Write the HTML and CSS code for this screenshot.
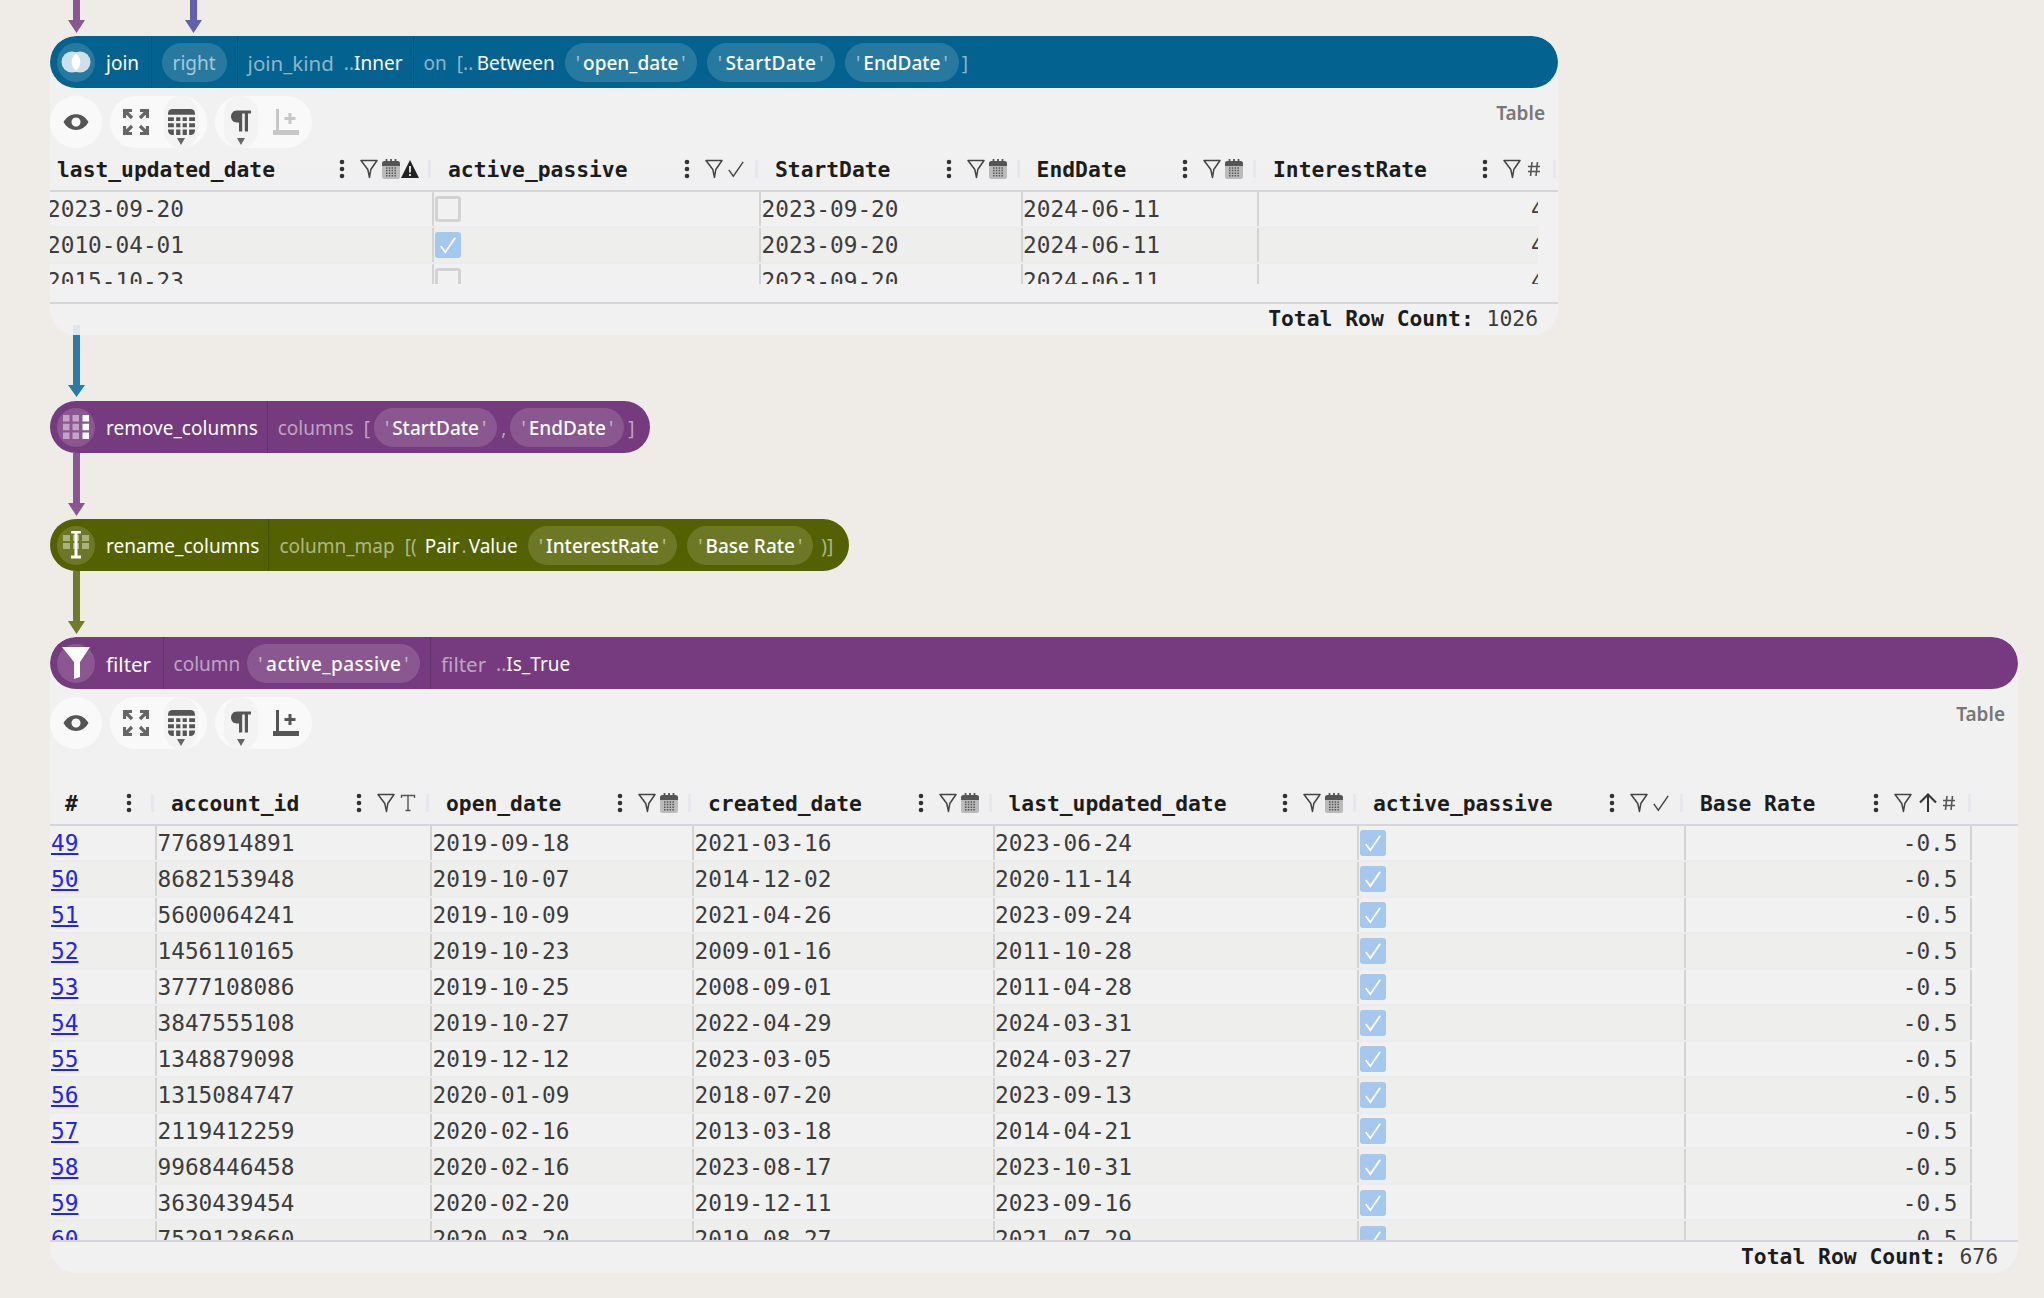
FILE: index.html
```html
<!DOCTYPE html>
<html lang="en">

<head>
    <title>Workflow</title>
    <link rel="stylesheet" href="styles.css">
</head>

<body>
    <svg class="defs">
        <symbol id="i-kebab" viewBox="0 0 8 20"><circle cx="4" cy="3" r="2.3"/><circle cx="4" cy="10" r="2.3"/><circle cx="4" cy="17" r="2.3"/></symbol>
        <symbol id="i-filter" viewBox="0 0 18 20"><path d="M1 1.5H17L10.8 10.5L9.5 18.5L7.8 10.5Z" fill="none" stroke="#444" stroke-width="1.5" stroke-linejoin="round"/></symbol>
        <symbol id="i-cal" viewBox="0 0 18 20"><rect x="0" y="2" width="18" height="18" rx="2.5" fill="#bbb"/><path d="M0 4.5C0 3 1 2 2.5 2h13C17 2 18 3 18 4.5V7H0z" fill="#555"/><path d="M4.5 0v4M9 0v4M13.5 0v4" stroke="#555" stroke-width="1.8"/><path d="M4 9h10M4 11.6h10M4 14.2h10M4 16.8h10" stroke="#555" stroke-width="1.5" stroke-dasharray="1.5 1.3"/></symbol>
        <symbol id="i-warn" viewBox="0 0 18 18"><path d="M9 0L18 18H0Z" fill="#222"/><path d="M9 6v6.5M9 14v2" stroke="#f1f1f2" stroke-width="1.8"/></symbol>
        <symbol id="i-check" viewBox="0 0 20 20"><path d="M2 11L7 18L18 2" fill="none" stroke="#444" stroke-width="1.5"/></symbol>
        <symbol id="i-text" viewBox="0 0 16 18"><path d="M1.5 4V1.5H14.5V4M8 1.5V16.5M5.5 16.5H10.5" fill="none" stroke="#555" stroke-width="1.4"/></symbol>
        <symbol id="i-num" viewBox="0 0 14 16"><path d="M5 1L3.5 15M10.5 1L9 15M1 5.5H13M1 10.5H13" fill="none" stroke="#555" stroke-width="1.6"/></symbol>
        <symbol id="i-up" viewBox="0 0 20 20"><path d="M10 19V2M2 9.5L10 1.5L18 9.5" fill="none" stroke="#333" stroke-width="2"/></symbol>
        <symbol id="i-eye" viewBox="0 0 26 18"><path fill-rule="evenodd" d="M0.5 9C6 -1.5 20 -1.5 25.5 9C20 19.5 6 19.5 0.5 9ZM13 4.5a4.5 4.5 0 1 0 0.01 0Z"/></symbol>
        <symbol id="i-full" viewBox="0 0 26 26"><path d="M1.5 9V1.5H9M2.5 2.5L9 9M24.5 9V1.5H17M23.5 2.5L17 9M1.5 17V24.5H9M2.5 23.5L9 17M24.5 17V24.5H17M23.5 23.5L17 17" fill="none" stroke="#666" stroke-width="3.2"/></symbol>
        <symbol id="i-grid" viewBox="0 0 27 26"><rect width="27" height="26" rx="4.5" fill="#555"/><path d="M7 6.5V26M13.5 6.5V26M20 6.5V26M0 7H27M0 13.2H27M0 19.4H27" stroke="#f2f2f2" stroke-width="2.3"/></symbol>
        <symbol id="i-para" viewBox="0 0 22 22"><path d="M8 0.5H22V3.6H19V21.5H15.8V3.6H13.2V21.5H10V12.5H8C0 12.5 0 0.5 8 0.5Z"/></symbol>
        <symbol id="i-add" viewBox="0 0 26 26"><path d="M0 21H26V26H0ZM3 0H6V21H3ZM15.5 4H18.5V8H22.5V11H18.5V15H15.5V11H11.5V8H15.5Z"/></symbol>
    </svg>

    <div class="arrow-row">
        <svg class="arrow" width="17" height="33" viewBox="0 0 17 33"><path d="M5 0H12V20H17L8.5 33L0 20H5Z" fill="#8a5593"/></svg>
        <svg class="arrow" width="17" height="33" viewBox="0 0 17 33"><path d="M5 0H12V20H17L8.5 33L0 20H5Z" fill="#6060ad"/></svg>
    </div>

    <div class="card card-short">
        <div class="node-head blue">
            <span class="node-icon">
                <svg width="30" height="24" viewBox="0 0 30 24"><circle cx="11" cy="12" r="10.5" fill="#cfe0ea"/><circle cx="19" cy="12" r="10.5" fill="#cfe0ea"/><path d="M15 3.5a10.5 10.5 0 0 1 0 17a10.5 10.5 0 0 1 0-17Z" fill="#fff"/></svg>
            </span>
            <span class="node-name name-pad">join</span>
            <span class="seg"><span class="pill plain">right</span></span>
            <span class="seg"><span class="dim roomy">join_kind</span><span><span class="dim">..</span>Inner</span></span>
            <span class="seg"><span class="dim">on</span><span><span class="dim open">[..</span>Between</span><span class="pill"><i>'</i>open_date<i>'</i></span><span class="pill spaced"><i>'</i>StartDate<i>'</i></span><span class="pill"><i>'</i>EndDate<i>'</i></span><span class="dim after-pill">]</span></span>
        </div>
        <div class="tools">
            <div class="tool-pills">
                <div class="tool-pill eye"><svg class="ic" width="26" height="18"><use href="#i-eye"/></svg></div>
                <div class="tool-pill">
                    <svg class="ic-full" width="26" height="26"><use href="#i-full"/></svg>
                    <span class="drop"><svg width="27" height="26"><use href="#i-grid"/></svg></span>
                </div>
                <div class="tool-pill">
                    <span class="drop para"><svg class="ic" width="22" height="22"><use href="#i-para"/></svg></span>
                    <svg class="ic-add off" width="26" height="26"><use href="#i-add"/></svg>
                </div>
            </div>
            <span class="viz-name">Table</span>
        </div>
        <div class="grid">
            <div class="hd cols-a">
                <div class="hc"><b>last_updated_date</b><span class="acts"><svg class="k"><use href="#i-kebab"/></svg><svg class="f"><use href="#i-filter"/></svg><svg class="c"><use href="#i-cal"/></svg><svg class="w"><use href="#i-warn"/></svg></span><s></s></div>
                <div class="hc"><b>active_passive</b><span class="acts"><svg class="k"><use href="#i-kebab"/></svg><svg class="f"><use href="#i-filter"/></svg><svg class="c"><use href="#i-check"/></svg></span><s></s></div>
                <div class="hc"><b>StartDate</b><span class="acts"><svg class="k"><use href="#i-kebab"/></svg><svg class="f"><use href="#i-filter"/></svg><svg class="c"><use href="#i-cal"/></svg></span><s></s></div>
                <div class="hc"><b>EndDate</b><span class="acts"><svg class="k"><use href="#i-kebab"/></svg><svg class="f"><use href="#i-filter"/></svg><svg class="c"><use href="#i-cal"/></svg></span><s></s></div>
                <div class="hc"><b>InterestRate</b><span class="acts"><svg class="k"><use href="#i-kebab"/></svg><svg class="f"><use href="#i-filter"/></svg><svg class="n"><use href="#i-num"/></svg></span><s></s></div>
            </div>
            <div class="body body-a">
                <div class="row cols-a"><div class="td first">2023-09-20</div><div class="td"><span class="cb"></span></div><div class="td">2023-09-20</div><div class="td">2024-06-11</div><div class="td rate">4.25</div></div>
                <div class="row cols-a"><div class="td first">2010-04-01</div><div class="td"><span class="cb on"><svg width="18" height="18" viewBox="0 0 20 20"><path d="M2 11L7 18L18 2" fill="none" stroke="#fff" stroke-width="2"/></svg></span></div><div class="td">2023-09-20</div><div class="td">2024-06-11</div><div class="td rate">4.25</div></div>
                <div class="row cols-a"><div class="td first">2015-10-23</div><div class="td"><span class="cb"></span></div><div class="td">2023-09-20</div><div class="td">2024-06-11</div><div class="td rate">4.25</div></div>
            </div>
        </div>
        <div class="foot foot-a"><b>Total Row Count:</b> 1026</div>
    </div>

    <svg class="arrow link first-link" width="17" height="76" viewBox="0 0 17 76"><path d="M5 0H12V10H5Z" fill="#dfe7ec"/><path d="M5 10H12V60H17L8.5 72L0 60H5Z" fill="#2a7ba6"/></svg>

    <div class="node-head purple">
        <span class="node-icon">
            <svg width="26" height="24" viewBox="0 0 26 24"><path d="M0 0h6.5v6.5H0zM9.5 0H16v6.5H9.5zM0 8.7h6.5v6.5H0zM9.5 8.7H16v6.5H9.5zM0 17.5h6.5V24H0zM9.5 17.5H16V24H9.5z" fill="#c2a4c8"/><path d="M19.5 0H26v6.5h-6.5zM19.5 8.7H26v6.5h-6.5zM19.5 17.5H26V24h-6.5z" fill="#fff"/></svg>
        </span>
        <span class="node-name">remove_columns</span>
        <span class="seg"><span class="dim">columns</span><span class="tight"><span class="dim">[</span><span class="pill"><i>'</i>StartDate<i>'</i></span><span class="dim">,</span><span class="pill"><i>'</i>EndDate<i>'</i></span><span class="dim">]</span></span></span>
    </div>

    <svg class="arrow link" width="17" height="66" viewBox="0 0 17 66"><path d="M5 0H12V50H17L8.5 63L0 50H5Z" fill="#8a5593"/></svg>

    <div class="node-head olive">
        <span class="node-icon">
            <svg width="28" height="28" viewBox="0 0 28 28"><path d="M1 4h7v6H1zM20 4h7v6h-7zM1 12h7v6H1zM20 12h7v6h-7zM11 4h6v6h-6zM11 12h6v6h-6z" fill="#a9b27a"/><path d="M9 1h10M9 26h10M14 1v25" fill="none" stroke="#fff" stroke-width="3"/></svg>
        </span>
        <span class="node-name">rename_columns</span>
        <span class="seg"><span class="dim">column_map</span><span class="tight wide"><span class="dim">[(</span><span>Pair<span class="dim dot">.</span>Value</span></span><span class="pill"><i>'</i>InterestRate<i>'</i></span><span class="pill"><i>'</i>Base Rate<i>'</i></span><span class="dim close">)]</span></span>
    </div>

    <svg class="arrow link" width="17" height="66" viewBox="0 0 17 66"><path d="M5 0H12V50H17L8.5 63L0 50H5Z" fill="#6f7d2a"/></svg>

    <div class="card card-tall">
        <div class="node-head purple">
            <span class="node-icon">
                <svg width="28" height="32" viewBox="0 0 28 32"><path d="M0 0H28L18 15V30L12 32V15Z" fill="#fff"/></svg>
            </span>
            <span class="node-name roomy name-pad">filter</span>
            <span class="seg"><span class="dim">column</span><span class="pill spaced near"><i>'</i>active_passive<i>'</i></span></span>
            <span class="seg"><span class="dim roomy">filter</span><span><span class="dim">..</span>Is_True</span></span>
        </div>
        <div class="tools tools-gap">
            <div class="tool-pills">
                <div class="tool-pill eye"><svg class="ic" width="26" height="18"><use href="#i-eye"/></svg></div>
                <div class="tool-pill">
                    <svg class="ic-full" width="26" height="26"><use href="#i-full"/></svg>
                    <span class="drop"><svg width="27" height="26"><use href="#i-grid"/></svg></span>
                </div>
                <div class="tool-pill">
                    <span class="drop para"><svg class="ic" width="22" height="22"><use href="#i-para"/></svg></span>
                    <svg class="ic-add" width="26" height="26"><use href="#i-add"/></svg>
                </div>
            </div>
            <span class="viz-name">Table</span>
        </div>
        <div class="grid">
            <div class="hd cols-b">
                <div class="hc"><b>#</b><span class="acts"><svg class="k"><use href="#i-kebab"/></svg></span><s></s></div>
                <div class="hc"><b>account_id</b><span class="acts"><svg class="k"><use href="#i-kebab"/></svg><svg class="f"><use href="#i-filter"/></svg><svg class="t"><use href="#i-text"/></svg></span><s></s></div>
                <div class="hc"><b>open_date</b><span class="acts"><svg class="k"><use href="#i-kebab"/></svg><svg class="f"><use href="#i-filter"/></svg><svg class="c"><use href="#i-cal"/></svg></span><s></s></div>
                <div class="hc"><b>created_date</b><span class="acts"><svg class="k"><use href="#i-kebab"/></svg><svg class="f"><use href="#i-filter"/></svg><svg class="c"><use href="#i-cal"/></svg></span><s></s></div>
                <div class="hc"><b>last_updated_date</b><span class="acts"><svg class="k"><use href="#i-kebab"/></svg><svg class="f"><use href="#i-filter"/></svg><svg class="c"><use href="#i-cal"/></svg></span><s></s></div>
                <div class="hc"><b>active_passive</b><span class="acts"><svg class="k"><use href="#i-kebab"/></svg><svg class="f"><use href="#i-filter"/></svg><svg class="c"><use href="#i-check"/></svg></span><s></s></div>
                <div class="hc"><b>Base Rate</b><span class="acts"><svg class="k"><use href="#i-kebab"/></svg><svg class="f"><use href="#i-filter"/></svg><svg class="u"><use href="#i-up"/></svg><svg class="n"><use href="#i-num"/></svg></span><s></s></div>
            </div>
            <div class="body body-b">
                <div class="row cols-b"><div class="td idx"><a href="#">49</a></div><div class="td">7768914891</div><div class="td">2019-09-18</div><div class="td">2021-03-16</div><div class="td">2023-06-24</div><div class="td"><span class="cb on"><svg width="18" height="18" viewBox="0 0 20 20"><path d="M2 11L7 18L18 2" fill="none" stroke="#fff" stroke-width="2"/></svg></span></div><div class="td num">-0.5</div></div>
                <div class="row cols-b"><div class="td idx"><a href="#">50</a></div><div class="td">8682153948</div><div class="td">2019-10-07</div><div class="td">2014-12-02</div><div class="td">2020-11-14</div><div class="td"><span class="cb on"><svg width="18" height="18" viewBox="0 0 20 20"><path d="M2 11L7 18L18 2" fill="none" stroke="#fff" stroke-width="2"/></svg></span></div><div class="td num">-0.5</div></div>
                <div class="row cols-b"><div class="td idx"><a href="#">51</a></div><div class="td">5600064241</div><div class="td">2019-10-09</div><div class="td">2021-04-26</div><div class="td">2023-09-24</div><div class="td"><span class="cb on"><svg width="18" height="18" viewBox="0 0 20 20"><path d="M2 11L7 18L18 2" fill="none" stroke="#fff" stroke-width="2"/></svg></span></div><div class="td num">-0.5</div></div>
                <div class="row cols-b"><div class="td idx"><a href="#">52</a></div><div class="td">1456110165</div><div class="td">2019-10-23</div><div class="td">2009-01-16</div><div class="td">2011-10-28</div><div class="td"><span class="cb on"><svg width="18" height="18" viewBox="0 0 20 20"><path d="M2 11L7 18L18 2" fill="none" stroke="#fff" stroke-width="2"/></svg></span></div><div class="td num">-0.5</div></div>
                <div class="row cols-b"><div class="td idx"><a href="#">53</a></div><div class="td">3777108086</div><div class="td">2019-10-25</div><div class="td">2008-09-01</div><div class="td">2011-04-28</div><div class="td"><span class="cb on"><svg width="18" height="18" viewBox="0 0 20 20"><path d="M2 11L7 18L18 2" fill="none" stroke="#fff" stroke-width="2"/></svg></span></div><div class="td num">-0.5</div></div>
                <div class="row cols-b"><div class="td idx"><a href="#">54</a></div><div class="td">3847555108</div><div class="td">2019-10-27</div><div class="td">2022-04-29</div><div class="td">2024-03-31</div><div class="td"><span class="cb on"><svg width="18" height="18" viewBox="0 0 20 20"><path d="M2 11L7 18L18 2" fill="none" stroke="#fff" stroke-width="2"/></svg></span></div><div class="td num">-0.5</div></div>
                <div class="row cols-b"><div class="td idx"><a href="#">55</a></div><div class="td">1348879098</div><div class="td">2019-12-12</div><div class="td">2023-03-05</div><div class="td">2024-03-27</div><div class="td"><span class="cb on"><svg width="18" height="18" viewBox="0 0 20 20"><path d="M2 11L7 18L18 2" fill="none" stroke="#fff" stroke-width="2"/></svg></span></div><div class="td num">-0.5</div></div>
                <div class="row cols-b"><div class="td idx"><a href="#">56</a></div><div class="td">1315084747</div><div class="td">2020-01-09</div><div class="td">2018-07-20</div><div class="td">2023-09-13</div><div class="td"><span class="cb on"><svg width="18" height="18" viewBox="0 0 20 20"><path d="M2 11L7 18L18 2" fill="none" stroke="#fff" stroke-width="2"/></svg></span></div><div class="td num">-0.5</div></div>
                <div class="row cols-b"><div class="td idx"><a href="#">57</a></div><div class="td">2119412259</div><div class="td">2020-02-16</div><div class="td">2013-03-18</div><div class="td">2014-04-21</div><div class="td"><span class="cb on"><svg width="18" height="18" viewBox="0 0 20 20"><path d="M2 11L7 18L18 2" fill="none" stroke="#fff" stroke-width="2"/></svg></span></div><div class="td num">-0.5</div></div>
                <div class="row cols-b"><div class="td idx"><a href="#">58</a></div><div class="td">9968446458</div><div class="td">2020-02-16</div><div class="td">2023-08-17</div><div class="td">2023-10-31</div><div class="td"><span class="cb on"><svg width="18" height="18" viewBox="0 0 20 20"><path d="M2 11L7 18L18 2" fill="none" stroke="#fff" stroke-width="2"/></svg></span></div><div class="td num">-0.5</div></div>
                <div class="row cols-b"><div class="td idx"><a href="#">59</a></div><div class="td">3630439454</div><div class="td">2020-02-20</div><div class="td">2019-12-11</div><div class="td">2023-09-16</div><div class="td"><span class="cb on"><svg width="18" height="18" viewBox="0 0 20 20"><path d="M2 11L7 18L18 2" fill="none" stroke="#fff" stroke-width="2"/></svg></span></div><div class="td num">-0.5</div></div>
                <div class="row cols-b"><div class="td idx"><a href="#">60</a></div><div class="td">7529128660</div><div class="td">2020-03-20</div><div class="td">2019-08-27</div><div class="td">2021-07-29</div><div class="td"><span class="cb on"><svg width="18" height="18" viewBox="0 0 20 20"><path d="M2 11L7 18L18 2" fill="none" stroke="#fff" stroke-width="2"/></svg></span></div><div class="td num">-0.5</div></div>
            </div>
        </div>
        <div class="foot foot-b"><b>Total Row Count:</b> 676</div>
    </div>
</body>

</html>
```

FILE: styles.css
```css
html,
body {
    margin: 0;
    padding: 0;
}

body {
    width: 2044px;
    height: 1298px;
    padding-left: 50px;
    box-sizing: border-box;
    overflow: hidden;
    background-color: #efece8;
    font-family: "Noto Sans", Arial, sans-serif;
    font-size: 19px;
    color: #fff;
}

.defs {
    display: none;
}

/* Arrows between nodes */
.arrow {
    display: block;
}

.arrow-row {
    display: flex;
    gap: 100.5px;
    height: 36px;
    padding-left: 17.5px;
}

.link {
    margin-left: 17.5px;
    position: relative;
}

.first-link {
    margin-top: -10px;
}

/* Cards */
.card {
    background-color: #f1f1f2;
    border-radius: 26px;
    overflow: hidden;
}

.card-short {
    width: 1508px;
    height: 299px;
}

.card-tall {
    width: 1968px;
    height: 636px;
}

/* Node header */
.node-head {
    display: flex;
    align-items: center;
    width: fit-content;
    height: 52px;
    padding: 0 6px 0 7px;
    border-radius: 26px;
    box-sizing: border-box;
    white-space: nowrap;
}

.card .node-head {
    width: 100%;
}

.blue {
    background-color: #03628f;
}

.purple {
    background-color: #763a7e;
}

.olive {
    background-color: #536100;
}

.node-icon {
    display: flex;
    align-items: center;
    justify-content: center;
    flex: none;
    width: 38px;
    height: 39px;
    border-radius: 50%;
    background-color: rgba(255, 255, 255, 0.15);
}

.node-name {
    padding: 2px 9px 0 11px;
}

.name-pad {
    padding-right: 11.5px;
}

.seg {
    display: flex;
    align-items: center;
    gap: 10px;
    height: 100%;
    padding: 0 10px;
    border-left: 1px solid rgba(0, 0, 0, 0.15);
}

/* nudges text down a pixel without moving the pills */
.seg > span:not(.pill):not(.tight),
.tight > span:not(.pill) {
    padding-top: 2px;
}

.tight {
    display: flex;
    align-items: center;
    gap: 4px;
}

.wide {
    gap: 8px;
}

.dot {
    padding: 0 2px;
}

.open {
    padding-right: 3.5px;
}

.close {
    margin-left: -2px;
}

.after-pill {
    margin-left: -7px;
}

.near {
    margin-left: -3px;
}

.roomy {
    font-size: 20.5px;
}

.spaced {
    letter-spacing: 0.45px;
}

.dim,
.pill i {
    color: rgba(255, 255, 255, 0.55);
    font-style: normal;
    font-weight: 400;
}

.pill {
    display: flex;
    align-items: center;
    gap: 3px;
    box-sizing: border-box;
    height: 39px;
    padding: 2px 11px 0;
    border-radius: 20px;
    background-color: rgba(255, 255, 255, 0.15);
    font-weight: 500;
}

.plain {
    color: rgba(255, 255, 255, 0.6);
    font-weight: 400;
}

/* Toolbar */
.tools {
    display: flex;
    justify-content: space-between;
    padding: 8px 13px 0 0;
    height: 60px;
    box-sizing: border-box;
}

.tools-gap {
    height: 93px;
}

.tool-pills {
    display: flex;
    gap: 8px;
}

.tool-pill {
    display: flex;
    align-items: center;
    gap: 19px;
    height: 52px;
    padding: 0 13px;
    border-radius: 26px;
    background-color: #f9f9f9;
    fill: #555;
}

.eye {
    width: 52px;
    padding: 0;
    justify-content: center;
}

.drop {
    position: relative;
    display: flex;
    align-items: center;
    justify-content: center;
    width: 34px;
    height: 52px;
    margin-right: -4px;
    margin-left: -4px;
    border-radius: 17px;
    background-color: #f3f3f3;
}

.drop::after {
    content: "";
    position: absolute;
    left: 13px;
    top: 42px;
    border-left: 4.5px solid transparent;
    border-right: 4.5px solid transparent;
    border-top: 7px solid #666;
}

.para svg {
    margin: -2px 0 0 -3px;
}

.ic-add {
    fill: #555;
}

.off {
    opacity: 0.3;
}

.viz-name {
    margin-top: 7px;
    font-size: 19px;
    font-weight: 600;
    line-height: 20px;
    color: #777;
}

/* Table */
.grid {
    font-family: "DejaVu Sans Mono", "Liberation Mono", monospace;
}

.cols-a {
    display: grid;
    grid-template-columns: 382px 327px 261.6px 236.4px 300px;
}

.cols-b {
    display: grid;
    grid-template-columns: 105px 275px 262px 300.5px 364.5px 327px 287.5px;
}

.hd {
    height: 42px;
    border-bottom: 2px solid #d4d6db;
    background: linear-gradient(#f1f1f2 20%, #f0f0f0 40%);
    font-size: 21.3px;
    color: #1c1c1c;
}

.hc {
    display: flex;
    align-items: center;
    min-width: 0;
    height: 26px;
    padding: 0 0 0 16px;
    box-sizing: border-box;
    align-self: center;
    fill: #333;
}

.hc:first-child {
    padding-left: 7px;
}

.cols-b .hc:first-child {
    padding-left: 15px;
}

.hc b {
    font-weight: bold;
}

.hc s {
    flex: none;
    width: 3px;
    height: 18px;
    margin: 0 1px 0 0;
    background-color: #e6e8ee;
}

.acts {
    display: flex;
    align-items: center;
    margin-left: auto;
}

.acts .k {
    width: 8px;
    height: 20px;
}

.acts .f {
    width: 18px;
    height: 20px;
    margin-left: 14px;
}

.acts .c {
    width: 18px;
    height: 20px;
    margin: 0 10px 0 4px;
}

.acts .w {
    width: 18px;
    height: 18px;
    margin: 0 9px 0 -9px;
}

.acts .t {
    width: 16px;
    height: 18px;
    margin: 0 10px 0 5px;
}

.acts .n {
    width: 14px;
    height: 16px;
    margin: 0 12px 0 6px;
}

.acts .u {
    width: 20px;
    height: 20px;
    margin: 0 -2px 0 6px;
}

.acts .k:last-child {
    margin-right: 18px;
}

.body {
    overflow: hidden;
}

.body-a {
    height: 92px;
    margin-bottom: 18px;
}

.body-b {
    height: 414px;
}

.row {
    height: 33.95px;
    border-bottom: 2px solid #ececef;
    font-size: 22.75px;
    line-height: 33px;
    color: #3c3c3c;
    width: fit-content;
}

.row:nth-child(even) {
    background-color: #eeeeec;
}

.body-a .row {
    width: 1488px;
    overflow: hidden;
}

.td {
    display: flex;
    align-items: center;
    box-sizing: border-box;
    height: 100%;
    padding: 2px 0 0 0.5px;
    border-left: 2px solid #d4d4d4;
    white-space: nowrap;
    overflow: hidden;
}

.first {
    padding-left: 0;
    border-left: 0;
    text-indent: -3px;
}

.idx {
    padding-left: 1px;
    border-left: 0;
}

.idx a {
    color: #2323ee;
}

.num {
    justify-content: flex-end;
    padding-right: 12px;
    border-right: 2px solid #d4d4d4;
}

.rate {
    padding-left: 272px;
}

.cb {
    display: flex;
    align-items: center;
    justify-content: center;
    box-sizing: border-box;
    width: 26px;
    height: 26px;
    margin: -1px 0 0 0;
    border: 3px solid #d3d3d3;
    border-radius: 3px;
    flex: none;
}

.cb.on {
    border: 0;
    background-color: #a5c8ef;
}

/* Footer */
.foot {
    box-sizing: border-box;
    height: 33px;
    padding-right: 20px;
    border-top: 2px solid #d4d6db;
    font-family: "DejaVu Sans Mono", "Liberation Mono", monospace;
    font-size: 21.35px;
    line-height: 29px;
    text-align: right;
    color: #3c3c3c;
}

.foot b {
    color: #1c1c1c;
}
```
